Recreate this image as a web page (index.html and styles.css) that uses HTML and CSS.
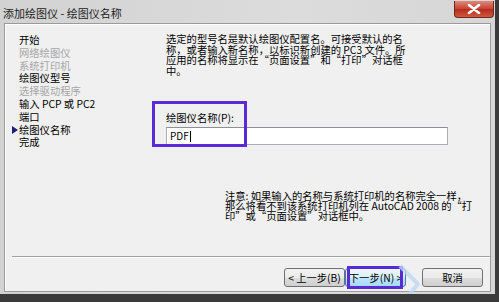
FILE: index.html
```html
<!DOCTYPE html>
<html lang="zh-CN">
<head>
    <meta charset="UTF-8">
    <title>添加绘图仪 - 绘图仪名称</title>
    <link rel="stylesheet" href="styles.css">
</head>
<body>
    <div class="window">
        <div class="titlebar">
            <span class="title">添加绘图仪 - 绘图仪名称</span>
            <span class="close">
                <svg width="14" height="10" viewBox="0 0 14 10">
                    <path d="M2 1 L12 9 M12 1 L2 9" stroke="#fff" stroke-width="2.6" stroke-linecap="round"/>
                </svg>
            </span>
        </div>
        <div class="frame">
            <div class="main">
                <ul class="steps">
                    <li>开始</li>
                    <li class="off">网络绘图仪</li>
                    <li class="off">系统打印机</li>
                    <li>绘图仪型号</li>
                    <li class="off">选择驱动程序</li>
                    <li>输入 PCP 或 PC2</li>
                    <li>端口</li>
                    <li class="current">绘图仪名称</li>
                    <li>完成</li>
                </ul>
                <div class="content">
                    <p class="desc">选定的型号名是默认绘图仪配置名。可接受默认的名<br>称，或者输入新名称，以标识新创建的 PC3 文件。所<br>应用的名称将显示在“页面设置”和“打印”对话框<br>中。</p>
                    <div class="field">
                        <label class="field-label" for="plotterName">绘图仪名称(P):</label>
                        <div class="input" id="plotterName">PDF<span class="caret"></span></div>
                        <div class="mark mark-field"></div>
                    </div>
                    <p class="note">注意: 如果输入的名称与系统打印机的名称完全一样，<br>那么将看不到该系统打印机列在 AutoCAD 2008 的“打<br>印”或“页面设置”对话框中。</p>
                </div>
            </div>
            <div class="sep"></div>
            <div class="buttons">
                <div class="pair">
                    <button class="btn">&lt; 上一步(B)</button>
                    <button class="btn btn-default">下一步(N) &gt;</button>
                    <div class="mark mark-next"></div>
                    <svg class="pointer" width="22" height="36" viewBox="0 0 22 36">
                        <path d="M2 2 L20 20 L8 34" fill="none" stroke="#bcd8f2" stroke-width="4" stroke-linejoin="round" opacity="0.8"/>
                    </svg>
                </div>
                <button class="btn btn-cancel">取消</button>
            </div>
        </div>
    </div>
</body>
</html>
```

FILE: styles.css
```css
body {
    margin: 0;
    background: #3a3a3a;
    font-family: "Noto Sans CJK SC", sans-serif;
    font-size: 10.3px;
    color: #000;
}
.window {
    width: 495px;
    height: 294px;
    display: flex;
    flex-direction: column;
    background: linear-gradient(90deg, #d2d2d2, #dcdcdc 60%, #d6d6d6);
}
.titlebar {
    height: 23px;
    display: flex;
    align-items: flex-start;
    justify-content: space-between;
}
.title {
    margin: 6px 0 0 3px;
    font-size: 11px;
    line-height: 14px;
    color: #1a1a1a;
}
.close {
    width: 38px;
    height: 16px;
    margin: 1px 1px 0 0;
    display: flex;
    align-items: center;
    justify-content: center;
    border: 1px solid #6b2a22;
    border-top: none;
    border-radius: 0 0 4px 4px;
    background: linear-gradient(#dc8a7c, #c7402f 50%, #b52a1c 51%, #cf5a3e);
}
.frame {
    flex: 1;
    margin: 0 4px 2px 4px;
    border: 1px solid #9a9a9a;
    box-shadow: inset 1px 1px 0 #fff;
    background: #f0f0f0;
    display: flex;
    flex-direction: column;
}
.main {
    height: 232px;
    display: flex;
}
.steps {
    list-style: none;
    width: 147px;
    margin: 0;
    padding: 10px 0 0 14px;
}
.steps li {
    position: relative;
    line-height: 12.8px;
    height: 12.8px;
    white-space: nowrap;
}
.steps li.off {
    color: #a6a6a6;
}
.steps li.current::before {
    content: "";
    position: absolute;
    left: -7px;
    top: 2px;
    border-left: 6px solid #20207a;
    border-top: 4px solid transparent;
    border-bottom: 4px solid transparent;
}
.content {
    flex: 1;
    padding-top: 10px;
}
.desc {
    margin: 0;
    line-height: 10.5px;
    white-space: nowrap;
}
.field {
    position: relative;
    margin-top: 36px;
}
.field-label {
    display: block;
    line-height: 12px;
    margin-bottom: 3px;
}
.input {
    width: 277px;
    height: 16px;
    border: 1px solid #abadb3;
    border-top-color: #8e9097;
    background: #fff;
    padding-left: 3px;
    box-sizing: content-box;
    line-height: 16px;
    display: flex;
    align-items: center;
    font-size: 10px;
}
.caret {
    width: 1px;
    height: 11px;
    margin-left: 1px;
    background: #000;
}
.mark {
    position: absolute;
    border: 3px solid #5a2bd4;
    box-sizing: border-box;
    pointer-events: none;
}
.mark-field {
    left: -14px;
    top: -11px;
    width: 95px;
    height: 46px;
}
.note {
    margin: 46px 0 0 59px;
    line-height: 10px;
    white-space: nowrap;
}
.sep {
    margin-left: 7px;
    height: 1px;
    background: #a0a0a0;
    border-bottom: 1px solid #fff;
}
.buttons {
    display: flex;
    justify-content: flex-end;
    align-items: center;
    gap: 16px;
    margin-top: 10px;
    padding-right: 7px;
}
.pair {
    position: relative;
    display: flex;
}
.btn {
    width: 61px;
    height: 19px;
    padding: 0;
    font-family: inherit;
    font-size: 10.3px;
    color: #000;
    border: 1px solid #707070;
    border-radius: 3px;
    background: linear-gradient(#f2f2f2, #ebebeb 50%, #dddddd 51%, #cfcfcf);
}
.btn-default {
    border-color: #3c7fb1;
    background: linear-gradient(#eaf6fd, #d9f0fc 50%, #bee6fd 51%, #a7d9f5);
}
.mark-next {
    left: 63px;
    top: -2px;
    width: 56px;
    height: 23px;
}
.pointer {
    position: absolute;
    left: 114px;
    top: -4px;
}
```
